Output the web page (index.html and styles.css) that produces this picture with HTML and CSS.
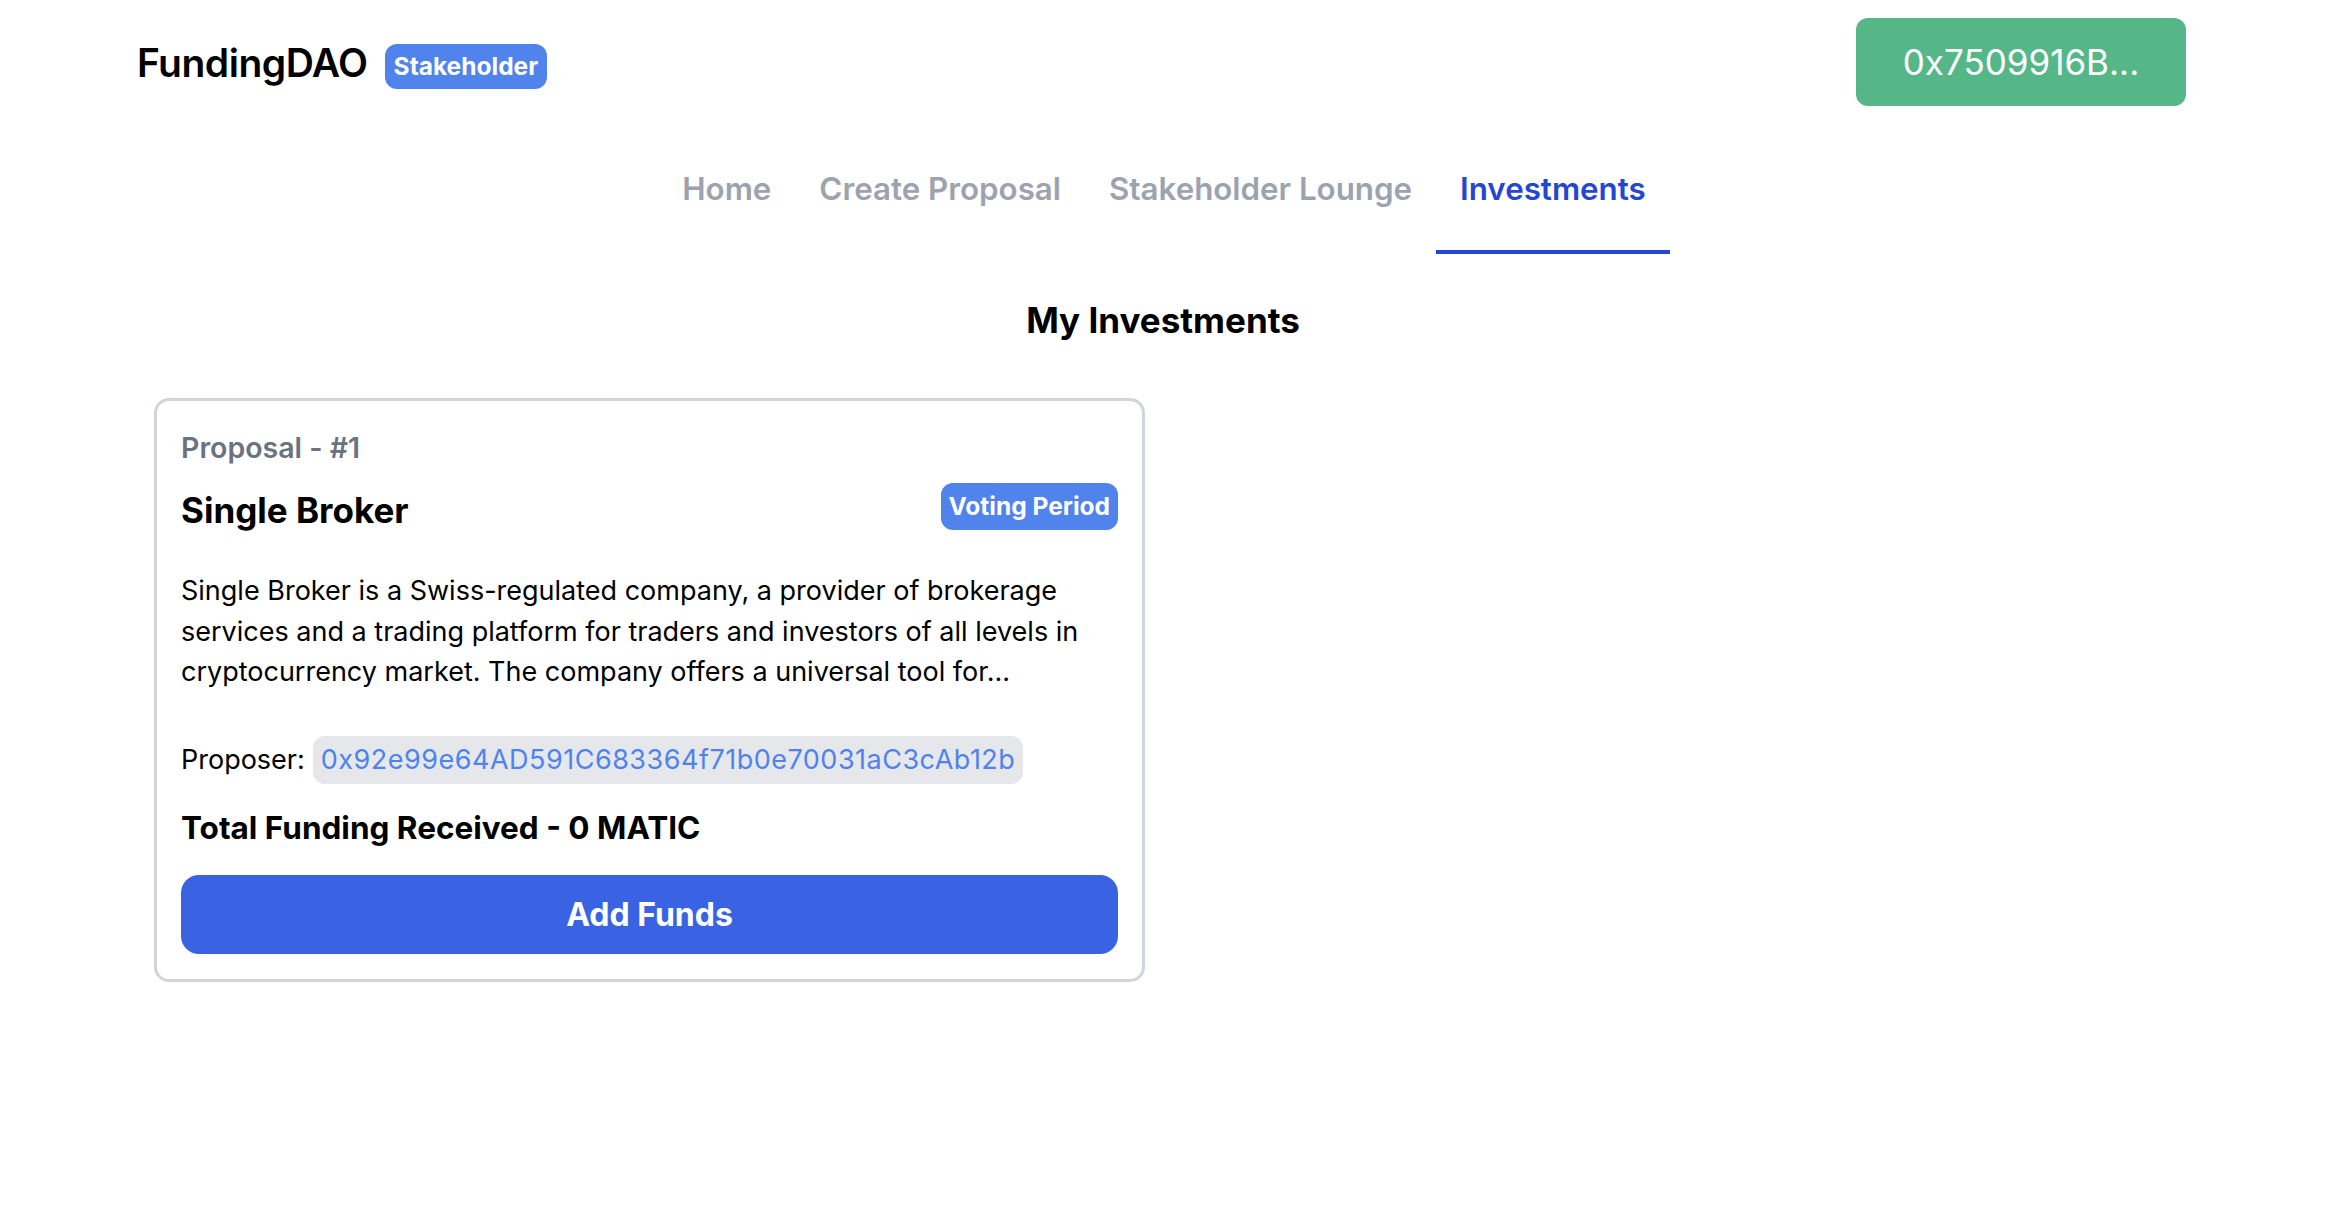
FILE: index.html
```html
<!DOCTYPE html>
<html lang="en">
<head>
<meta charset="utf-8">
<title>FundingDAO</title>
<link rel="stylesheet" href="styles.css">
</head>
<body>
<header class="header">
  <div class="brand">
    <span class="brand-name">FundingDAO</span>
    <span class="role-badge">Stakeholder</span>
  </div>
  <button class="wallet-btn">0x7509916B...</button>
</header>
<nav class="tabs">
  <a class="tab">Home</a>
  <a class="tab">Create Proposal</a>
  <a class="tab">Stakeholder Lounge</a>
  <a class="tab tab-active">Investments</a>
</nav>
<main class="main">
  <h2 class="page-title">My Investments</h2>
  <div class="cards">
    <div class="card">
      <div class="card-id">Proposal - #1</div>
      <div class="card-head">
        <h3 class="card-title">Single Broker</h3>
        <span class="status-badge">Voting Period</span>
      </div>
      <p class="card-desc">Single Broker is a Swiss-regulated company, a provider of brokerage services and a trading platform for traders and investors of all levels in cryptocurrency market. The company offers a universal tool for...</p>
      <div class="proposer">
        <span>Proposer:</span>
        <span class="address">0x92e99e64AD591C683364f71b0e70031aC3cAb12b</span>
      </div>
      <div class="total">Total Funding Received - 0 MATIC</div>
      <button class="fund-btn">Add Funds</button>
    </div>
  </div>
</main>
</body>
</html>
```
FILE: styles.css
```css
* { box-sizing: border-box; }
html, body { margin: 0; padding: 0; background: #ffffff; }
body {
  font-family: Inter, "Noto Sans", "Liberation Sans", sans-serif;
  color: #000000;
  width: 2340px;
}
.header {
  display: flex;
  justify-content: space-between;
  align-items: flex-start;
  padding: 18px 154px 0 137px;
}
.brand {
  display: flex;
  align-items: flex-start;
  gap: 17px;
  margin-top: 26px;
}
.brand-name {
  font-size: 39px;
  font-weight: 600;
  letter-spacing: -0.5px;
  line-height: 45px;
  margin-top: -4px;
}
.role-badge {
  background: #5083ec;
  color: #ffffff;
  font-weight: 700;
  font-size: 24.5px;
  line-height: 45px;
  height: 45px;
  padding: 0 9px;
  border-radius: 12px;
}
.wallet-btn {
  width: 330px;
  height: 88px;
  border: none;
  border-radius: 12px;
  background: #55b788;
  color: #ffffff;
  font-family: inherit;
  font-size: 35px;
  font-weight: 400;
}
.tabs {
  display: flex;
  justify-content: center;
  margin-top: 42px;
  padding-right: 12px;
}
.tab {
  font-size: 31.3px;
  font-weight: 600;
  line-height: 42px;
  color: #9ca3af;
  padding: 20px 24px 40px;
  border-bottom: 4px solid transparent;
}
.tab-active {
  color: #2546d0;
  border-bottom-color: #2546d0;
}
.main {
  padding: 0 154px;
}
.page-title {
  text-align: center;
  font-size: 35px;
  font-weight: 700;
  line-height: 48px;
  margin: 42px 0 54px;
  padding-right: 14px;
}
.cards {
  display: grid;
  grid-template-columns: 991px;
}
.card {
  border: 3px solid #d1d5db;
  border-radius: 15px;
  padding: 24px;
}
.card-id {
  margin-top: 3px;
  font-size: 28.5px;
  font-weight: 600;
  line-height: 40px;
  color: #6b7280;
}
.card-head {
  display: flex;
  justify-content: space-between;
  align-items: center;
  margin-top: 11px;
}
.card-title {
  margin: 0;
  padding-top: 7px;
  font-size: 35px;
  font-weight: 700;
  line-height: 48px;
}
.status-badge {
  background: #5083ec;
  color: #ffffff;
  font-size: 24.5px;
  font-weight: 700;
  line-height: 47px;
  height: 47px;
  padding: 0 8px;
  border-radius: 12px;
}
.card-desc {
  margin: 37px 0 0;
  font-size: 27px;
  line-height: 40.5px;
}
.proposer {
  display: flex;
  align-items: center;
  gap: 8px;
  margin-top: 43px;
  font-size: 27px;
}
.address {
  background: #e5e7eb;
  color: #4f83ec;
  height: 48px;
  line-height: 48px;
  padding: 0 8px;
  border-radius: 12px;
  letter-spacing: 0.5px;
}
.total {
  margin-top: 23px;
  font-size: 31.5px;
  font-weight: 700;
  line-height: 42px;
}
.fund-btn {
  display: block;
  width: 100%;
  height: 79px;
  margin-top: 26px;
  margin-bottom: 1px;
  border: none;
  border-radius: 18px;
  background: #3a63e3;
  color: #ffffff;
  font-family: inherit;
  font-size: 32px;
  font-weight: 700;
}
```
